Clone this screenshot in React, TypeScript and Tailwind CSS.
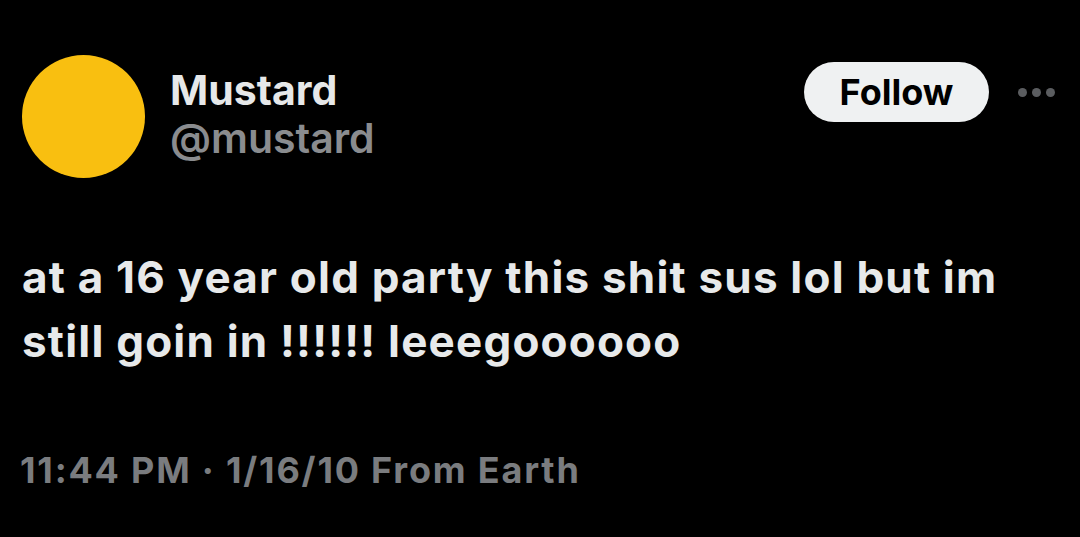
const App = () => {
  return (
    <main
      className="h-[537px] w-[1080px] overflow-hidden bg-black"
      style={{ fontFamily: "Inter, 'Liberation Sans', sans-serif" }}
    >
      <div className="flex items-start pl-[22px] pr-[25px] pt-[55px]">
        <div className="h-[123px] w-[123px] shrink-0 rounded-full bg-[#f9bf10]" />
        <div className="ml-[25px] flex flex-col pt-[11px]">
          <span className="text-[41px] font-bold leading-[48px] text-[#e6e8e9]">Mustard</span>
          <span className="text-[41px] font-semibold leading-[48px] text-[#8a8c8f]">@mustard</span>
        </div>
        <div className="ml-auto mt-[7px] flex items-center">
          <button className="flex h-[60px] w-[185px] items-center justify-center rounded-full bg-[#eff1f2] text-[36px] font-bold text-black">
            Follow
          </button>
          <div className="ml-[29px] flex gap-[5px]">
            <span className="h-[9px] w-[9px] rounded-full bg-[#5b5d60]" />
            <span className="h-[9px] w-[9px] rounded-full bg-[#5b5d60]" />
            <span className="h-[9px] w-[9px] rounded-full bg-[#5b5d60]" />
          </div>
        </div>
      </div>
      <p className="mt-[67px] pl-[22px] pr-[30px] text-[44px] font-bold leading-[64px] tracking-[1.2px] text-[#e7e9ea]">
        at a 16 year old party this shit sus lol but im still goin in !!!!!! leeegoooooo
      </p>
      <p className="mt-[75px] pl-[20px] text-[36px] font-bold leading-[44px] tracking-[1.8px] text-[#7a7c7f]">
        11:44 PM · 1/16/10 From Earth
      </p>
    </main>
  );
};

export default App;
